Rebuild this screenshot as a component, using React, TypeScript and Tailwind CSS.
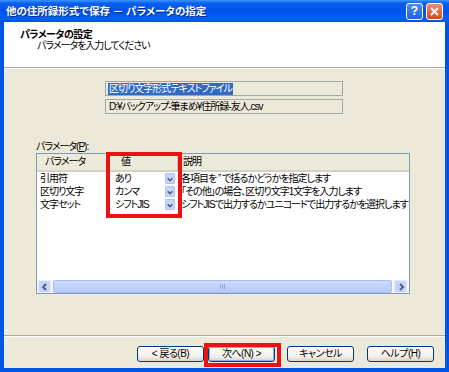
const jp = "font-['Liberation_Sans','Noto_Sans_CJK_JP',sans-serif] [font-feature-settings:'palt']";

const params = [
  { name: "引用符", value: "あり", desc: "各項目を ” で括るかどうかを指定します" },
  { name: "区切り文字", value: "カンマ", desc: "「その他」の場合、区切り文字1文字を入力します" },
  { name: "文字セット", value: "シフトJIS", desc: "シフトJISで出力するかユニコードで出力するかを選択します" },
];

function Chevron({ dir }: { dir: "left" | "right" | "down" }) {
  const d =
    dir === "left" ? "M6 2 L3 5 L6 8" : dir === "right" ? "M4 2 L7 5 L4 8" : "M2 4 L5 7 L8 4";
  return (
    <svg width="10" height="10" viewBox="0 0 10 10">
      <path d={d} fill="none" stroke="#4d6185" strokeWidth="2" />
    </svg>
  );
}

function XpButton({ label, focused }: { label: React.ReactNode; focused?: boolean }) {
  return (
    <div className="w-[67px] h-[16px] rounded-[3px] border border-[#003c74] bg-[linear-gradient(to_bottom,#ffffff,#f0efea_70%,#d8d3c8)] flex">
      <div
        className={`flex-1 flex items-center justify-center text-[10px] leading-none text-black tracking-[-0.5px] rounded-[2px] ${
          focused ? "border border-[#8fb0ef]" : ""
        }`}
      >
        {label}
      </div>
    </div>
  );
}

export default function App() {
  return (
    <div className={`relative w-[449px] h-[372px] overflow-hidden bg-[#0055e5] ${jp}`}>
      {/* title bar */}
      <div className="h-[22px] flex items-center justify-between pl-[6px] pr-[6px] bg-[linear-gradient(to_bottom,#3d95ff_0%,#0a5ff0_15%,#0053e8_50%,#0060fa_85%,#0050e0_100%)]">
        <span className="text-white text-[10.5px] font-bold leading-none [text-shadow:1px_1px_#0a2a8c]">
          他の住所録形式で保存 － パラメータの指定
        </span>
        <div className="flex gap-[3px]">
          <div className="w-[17px] h-[17px] rounded-[3px] border border-white bg-[linear-gradient(to_bottom,#4a8cf8,#2460dc)] flex items-center justify-center text-white text-[12px] font-bold leading-none">
            ?
          </div>
          <div className="w-[17px] h-[17px] rounded-[3px] border border-white bg-[linear-gradient(to_bottom,#f08d6c,#d8461c)] flex items-center justify-center">
            <svg width="11" height="11" viewBox="0 0 11 11">
              <path d="M2 2 L9 9 M9 2 L2 9" stroke="white" strokeWidth="2" />
            </svg>
          </div>
        </div>
      </div>

      {/* frame */}
      <div className="h-[350px] border-x-[4px] border-b-[4px] border-[#0055e5] flex flex-col">
        {/* header */}
        <div className="h-[45px] bg-white pt-[7px] pl-[16px]">
          <div className="text-[10px] font-bold leading-[12px] text-black tracking-[-0.5px]">パラメータの設定</div>
          <div className="text-[10px] leading-[12px] text-black tracking-[-1px] pl-[17px] mt-[-1px]">パラメータを入力してください</div>
        </div>
        <div className="h-[1px] bg-[#aca899]" />
        <div className="h-[1px] bg-white" />

        {/* body */}
        <div className="flex-1 bg-[#ece9d8] flex flex-col tracking-[-1px]">
          <div className="pt-[12px] pl-[101px] flex flex-col gap-[3px]">
            <div className="w-[238px] h-[15px] border border-[#a0a7ae] flex items-center pl-[2px]">
              <span className="bg-[#316ac5] text-white text-[10px] leading-[12px] px-[1px]">区切り文字形式テキストファイル</span>
            </div>
            <div className="w-[238px] h-[15px] border border-[#a0a7ae] flex items-center pl-[3px] text-[10px] leading-[12px] text-black">
              D:¥バックアップ-筆まめ¥住所録-友人.csv
            </div>
          </div>

          <div className="mt-[27px] pl-[32px] h-[12px] text-[10px] leading-[12px] text-black">
            パラメータ(<span className="underline">P</span>):
          </div>

          {/* list */}
          <div className="ml-[32px] w-[374px] h-[141px] border border-[#7f9db9] bg-white flex flex-col">
            <div className="h-[18px] flex bg-[#ebeadb] border-b-[2px] border-[#d6d2c2] text-[10px] leading-none text-black">
              <div className="w-[70px] flex items-center pl-[8px] border-r border-[#c7c5b2]">パラメータ</div>
              <div className="w-[71px] flex items-center pl-[14px] border-r border-[#c7c5b2]">値</div>
              <div className="flex-1 flex items-center pl-[5px]">説明</div>
            </div>
            {params.map((p) => (
              <div key={p.name} className="h-[13px] flex text-[10px] leading-[13px] text-black whitespace-nowrap">
                <div className="w-[70px] pl-[3px]">{p.name}</div>
                <div className="w-[71px] flex items-center justify-between pl-[8px] pr-[3px]">
                  <span>{p.value}</span>
                  <div className="w-[10px] h-[11px] rounded-[1px] bg-[#c5d5fb] border border-[#b0c4f2] flex items-center justify-center">
                    <Chevron dir="down" />
                  </div>
                </div>
                <div className="flex-1 pl-[3px] overflow-hidden">{p.desc}</div>
              </div>
            ))}
            <div className="flex-1" />
            <div className="h-[13px] flex items-center gap-[2px] pl-[1px] pr-[2px] bg-[#f7f6f2]">
              <div className="w-[13px] h-[13px] rounded-[2px] bg-[#c4d4fc] border border-[#e4ecfe] flex items-center justify-center">
                <Chevron dir="left" />
              </div>
              <div className="flex-1 h-[13px] rounded-[2px] bg-[linear-gradient(to_bottom,#cddafc,#b6cbf8)] border border-[#a8bef0] flex items-center justify-center">
                <div className="flex gap-[1px]">
                  <div className="w-[1px] h-[5px] bg-[#8aa4e4]" />
                  <div className="w-[1px] h-[5px] bg-[#8aa4e4]" />
                  <div className="w-[1px] h-[5px] bg-[#8aa4e4]" />
                </div>
              </div>
              <div className="w-[13px] h-[13px] rounded-[2px] bg-[#c4d4fc] border border-[#e4ecfe] flex items-center justify-center">
                <Chevron dir="right" />
              </div>
            </div>
          </div>

          <div className="mt-[41px] h-[1px] bg-[#aca899]" />
          <div className="h-[1px] bg-white" />

          <div className="mt-[9px] pl-[133px] flex">
            <XpButton label="< 戻る(B)" />
            <div className="ml-[4px]">
              <XpButton label="次へ(N) >" focused />
            </div>
            <div className="ml-[12px]">
              <XpButton label="キャンセル" />
            </div>
            <div className="ml-[13px]">
              <XpButton label="ヘルプ(H)" />
            </div>
          </div>
        </div>
      </div>

      {/* red highlights */}
      <div className="absolute left-[106px] top-[152px] w-[76px] h-[66px] border-[4px] border-[#ee1111]" />
      <div className="absolute left-[204px] top-[343px] w-[77px] h-[24px] border-[4px] border-[#ee1111]" />
    </div>
  );
}
